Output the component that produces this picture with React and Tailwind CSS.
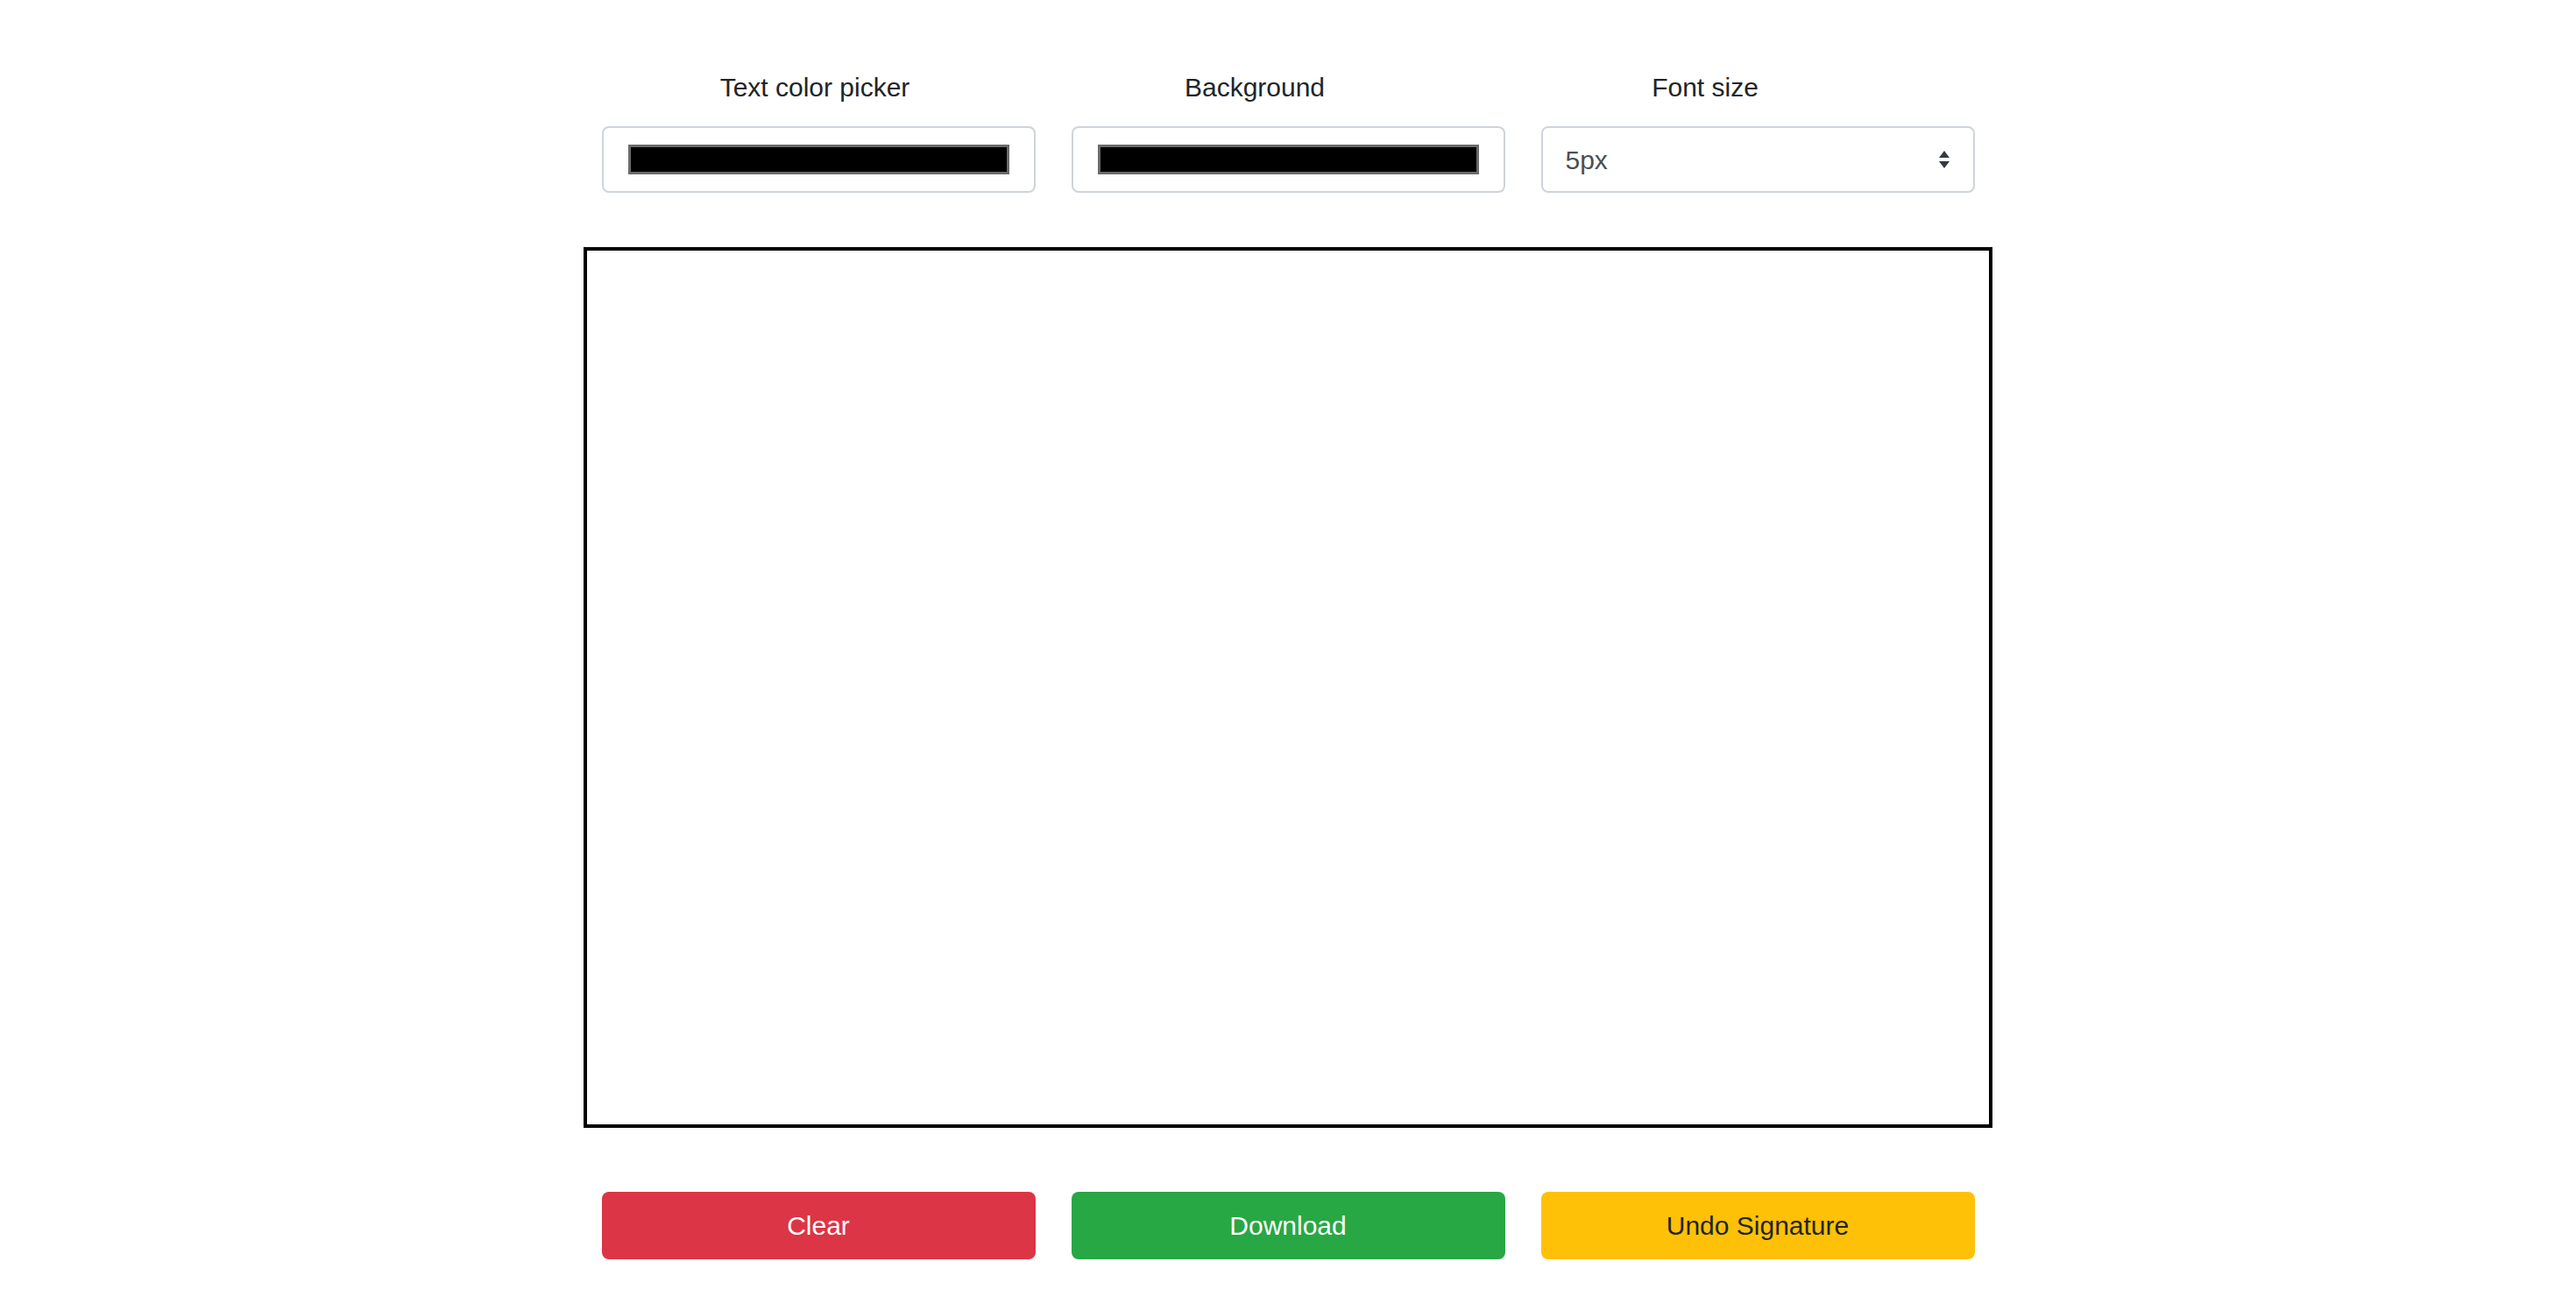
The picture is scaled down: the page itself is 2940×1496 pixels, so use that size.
export default function App() {
  const font = { fontFamily: '"Liberation Sans", Arial, sans-serif' };
  return (
    <div className="w-[2940px] h-[1496px] bg-white flex flex-col items-center" style={font}>
      <div className="mt-[80px] grid grid-cols-3 gap-x-[41px] w-[1567px]">
        <div className="text-center text-[30px] leading-[40px] text-[#212529] pr-[8px]">Text color picker</div>
        <div className="text-center text-[30px] leading-[40px] text-[#212529] pr-[76px]">Background</div>
        <div className="text-center text-[30px] leading-[40px] text-[#212529] pr-[120px]">Font size</div>
        <div className="mt-[24px] h-[76px] border-2 border-[#ced4da] rounded-[8px] flex items-center px-[28px]">
          <div className="w-full h-[34px] bg-black border-[3px] border-[#6b6b6b]" />
        </div>
        <div className="mt-[24px] h-[76px] border-2 border-[#ced4da] rounded-[8px] flex items-center px-[28px]">
          <div className="w-full h-[34px] bg-black border-[3px] border-[#6b6b6b]" />
        </div>
        <div className="mt-[24px] h-[76px] border-2 border-[#ced4da] rounded-[8px] flex items-center justify-between pl-[26px] pr-[26px]">
          <span className="text-[30px] text-[#495057]">5px</span>
          <svg width="14" height="24" viewBox="0 0 14 24"><path d="M7 2 L13 10 H1 Z M7 22 L13 14 H1 Z" fill="#343a40" /></svg>
        </div>
      </div>
      <div className="mt-[62px] w-[1608px] h-[1005px] border-[4px] border-black bg-white" />
      <div className="mt-[73px] grid grid-cols-3 gap-x-[41px] w-[1567px]">
        <button className="h-[77px] rounded-[8px] bg-[#dc3545] text-white text-[30px]">Clear</button>
        <button className="h-[77px] rounded-[8px] bg-[#28a745] text-white text-[30px]">Download</button>
        <button className="h-[77px] rounded-[8px] bg-[#ffc107] text-[#212529] text-[30px]">Undo Signature</button>
      </div>
    </div>
  );
}
